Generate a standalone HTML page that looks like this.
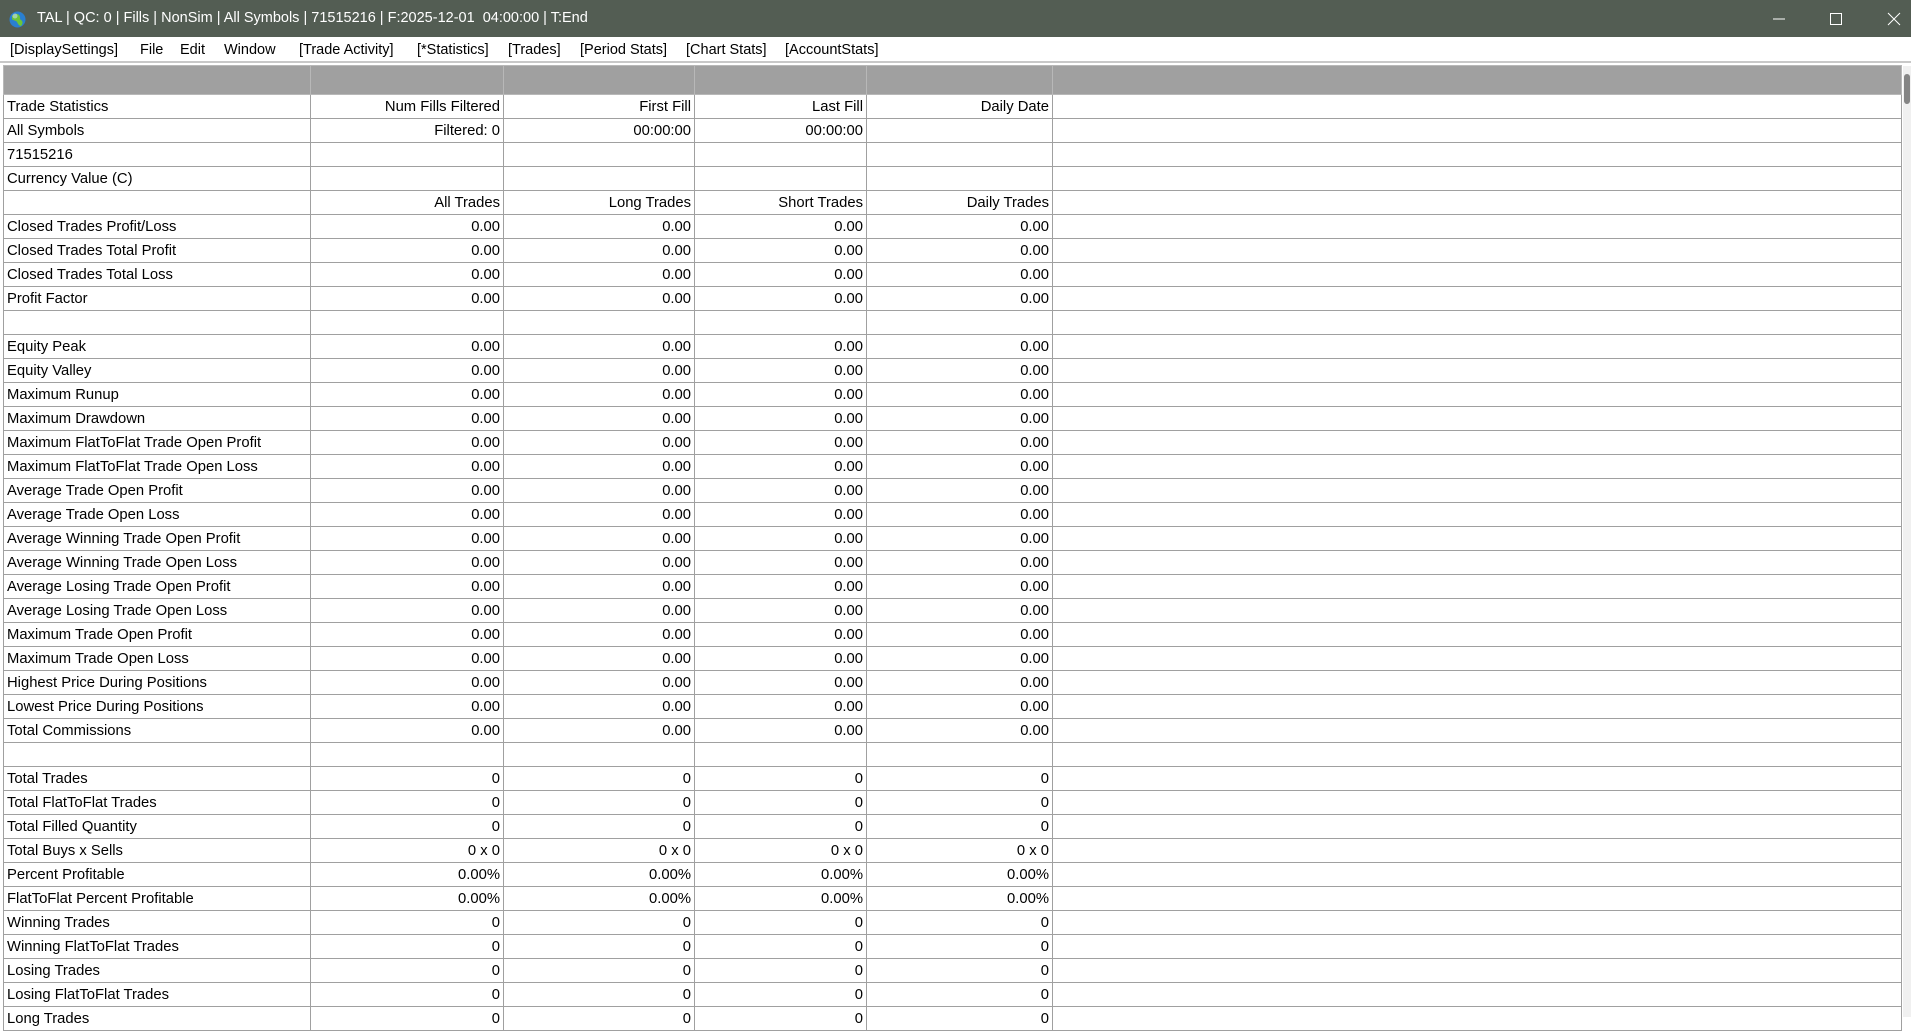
<!DOCTYPE html>
<html><head><meta charset="utf-8"><style>
*{margin:0;padding:0;box-sizing:border-box}
html,body{width:1911px;height:1017px;overflow:hidden;background:#fff;font-family:"Liberation Sans",sans-serif;font-size:14px;color:#000}
#title{position:absolute;left:0;top:0;width:1911px;height:37px;background:#535d53;color:#fff}
#title .t{position:absolute;left:37px;top:10px;font-size:14.5px}
#menu{position:absolute;left:0;top:37px;width:1911px;height:26px;background:#fff;border-bottom:2px solid #c8c8c8}
#menu span{position:absolute;top:5px;font-size:14.5px}
#tbl{position:absolute;left:3px;top:65px;border-collapse:collapse;table-layout:fixed;width:1899px}
#tbl td{height:24px;border:1px solid #a0a0a0;padding:0 3px 0 3px;text-align:right;white-space:nowrap;overflow:hidden;line-height:22px;font-size:14.8px}
#tbl td:first-child{text-align:left;border-left:1px solid #a0a0a0}
#tbl tr.h td{background:#a0a0a0;height:29px;border-color:#b8b8b8}
#sb{position:absolute;left:1903px;top:66px;width:8px;height:951px;background:#f0f0f0}
</style></head><body>
<div id="title">
<svg style="position:absolute;left:9px;top:11px" width="17" height="17" viewBox="0 0 17 17"><circle cx="8.5" cy="8.5" r="8" fill="#2a7fd0"/><path d="M3 5c2-2 5-3 7-1s0 4 2 5 2 4 0 6c-2 0-3-2-4-4s-4-1-5-3z" fill="#6cc43a"/><circle cx="6" cy="5" r="2.5" fill="#cde" opacity=".6"/></svg>
<div class="t">TAL | QC: 0 | Fills | NonSim | All Symbols | 71515216 | F:2025-12-01&nbsp; 04:00:00 | T:End</div>
<svg style="position:absolute;left:1772px;top:12px" width="14" height="14"><path d="M1 7h12" stroke="#fff" stroke-width="1"/></svg>
<svg style="position:absolute;left:1829px;top:12px" width="14" height="14"><rect x="1.5" y="1.5" width="11" height="11" fill="none" stroke="#fff" stroke-width="1"/></svg>
<svg style="position:absolute;left:1887px;top:12px" width="14" height="14"><path d="M1 1l12 12M13 1L1 13" stroke="#fff" stroke-width="1"/></svg>
</div>
<div id="menu">
<span style="left:10px">[DisplaySettings]</span><span style="left:140px">File</span><span style="left:180px">Edit</span><span style="left:224px">Window</span><span style="left:299px">[Trade Activity]</span><span style="left:417px">[*Statistics]</span><span style="left:508px">[Trades]</span><span style="left:580px">[Period Stats]</span><span style="left:686px">[Chart Stats]</span><span style="left:785px">[AccountStats]</span>
</div>
<table id="tbl">
<colgroup><col style="width:307px"><col style="width:193px"><col style="width:191px"><col style="width:172px"><col style="width:186px"><col></colgroup>
<tr class="h"><td></td><td></td><td></td><td></td><td></td><td></td></tr>
<tr><td>Trade Statistics</td><td>Num Fills Filtered</td><td>First Fill</td><td>Last Fill</td><td>Daily Date</td><td></td></tr>
<tr><td>All Symbols</td><td>Filtered: 0</td><td>00:00:00</td><td>00:00:00</td><td></td><td></td></tr>
<tr><td>71515216</td><td></td><td></td><td></td><td></td><td></td></tr>
<tr><td>Currency Value (C)</td><td></td><td></td><td></td><td></td><td></td></tr>
<tr><td></td><td>All Trades</td><td>Long Trades</td><td>Short Trades</td><td>Daily Trades</td><td></td></tr>
<tr><td>Closed Trades Profit/Loss</td><td>0.00</td><td>0.00</td><td>0.00</td><td>0.00</td><td></td></tr>
<tr><td>Closed Trades Total Profit</td><td>0.00</td><td>0.00</td><td>0.00</td><td>0.00</td><td></td></tr>
<tr><td>Closed Trades Total Loss</td><td>0.00</td><td>0.00</td><td>0.00</td><td>0.00</td><td></td></tr>
<tr><td>Profit Factor</td><td>0.00</td><td>0.00</td><td>0.00</td><td>0.00</td><td></td></tr>
<tr><td></td><td></td><td></td><td></td><td></td><td></td></tr>
<tr><td>Equity Peak</td><td>0.00</td><td>0.00</td><td>0.00</td><td>0.00</td><td></td></tr>
<tr><td>Equity Valley</td><td>0.00</td><td>0.00</td><td>0.00</td><td>0.00</td><td></td></tr>
<tr><td>Maximum Runup</td><td>0.00</td><td>0.00</td><td>0.00</td><td>0.00</td><td></td></tr>
<tr><td>Maximum Drawdown</td><td>0.00</td><td>0.00</td><td>0.00</td><td>0.00</td><td></td></tr>
<tr><td>Maximum FlatToFlat Trade Open Profit</td><td>0.00</td><td>0.00</td><td>0.00</td><td>0.00</td><td></td></tr>
<tr><td>Maximum FlatToFlat Trade Open Loss</td><td>0.00</td><td>0.00</td><td>0.00</td><td>0.00</td><td></td></tr>
<tr><td>Average Trade Open Profit</td><td>0.00</td><td>0.00</td><td>0.00</td><td>0.00</td><td></td></tr>
<tr><td>Average Trade Open Loss</td><td>0.00</td><td>0.00</td><td>0.00</td><td>0.00</td><td></td></tr>
<tr><td>Average Winning Trade Open Profit</td><td>0.00</td><td>0.00</td><td>0.00</td><td>0.00</td><td></td></tr>
<tr><td>Average Winning Trade Open Loss</td><td>0.00</td><td>0.00</td><td>0.00</td><td>0.00</td><td></td></tr>
<tr><td>Average Losing Trade Open Profit</td><td>0.00</td><td>0.00</td><td>0.00</td><td>0.00</td><td></td></tr>
<tr><td>Average Losing Trade Open Loss</td><td>0.00</td><td>0.00</td><td>0.00</td><td>0.00</td><td></td></tr>
<tr><td>Maximum Trade Open Profit</td><td>0.00</td><td>0.00</td><td>0.00</td><td>0.00</td><td></td></tr>
<tr><td>Maximum Trade Open Loss</td><td>0.00</td><td>0.00</td><td>0.00</td><td>0.00</td><td></td></tr>
<tr><td>Highest Price During Positions</td><td>0.00</td><td>0.00</td><td>0.00</td><td>0.00</td><td></td></tr>
<tr><td>Lowest Price During Positions</td><td>0.00</td><td>0.00</td><td>0.00</td><td>0.00</td><td></td></tr>
<tr><td>Total Commissions</td><td>0.00</td><td>0.00</td><td>0.00</td><td>0.00</td><td></td></tr>
<tr><td></td><td></td><td></td><td></td><td></td><td></td></tr>
<tr><td>Total Trades</td><td>0</td><td>0</td><td>0</td><td>0</td><td></td></tr>
<tr><td>Total FlatToFlat Trades</td><td>0</td><td>0</td><td>0</td><td>0</td><td></td></tr>
<tr><td>Total Filled Quantity</td><td>0</td><td>0</td><td>0</td><td>0</td><td></td></tr>
<tr><td>Total Buys x Sells</td><td>0 x 0</td><td>0 x 0</td><td>0 x 0</td><td>0 x 0</td><td></td></tr>
<tr><td>Percent Profitable</td><td>0.00%</td><td>0.00%</td><td>0.00%</td><td>0.00%</td><td></td></tr>
<tr><td>FlatToFlat Percent Profitable</td><td>0.00%</td><td>0.00%</td><td>0.00%</td><td>0.00%</td><td></td></tr>
<tr><td>Winning Trades</td><td>0</td><td>0</td><td>0</td><td>0</td><td></td></tr>
<tr><td>Winning FlatToFlat Trades</td><td>0</td><td>0</td><td>0</td><td>0</td><td></td></tr>
<tr><td>Losing Trades</td><td>0</td><td>0</td><td>0</td><td>0</td><td></td></tr>
<tr><td>Losing FlatToFlat Trades</td><td>0</td><td>0</td><td>0</td><td>0</td><td></td></tr>
<tr><td>Long Trades</td><td>0</td><td>0</td><td>0</td><td>0</td><td></td></tr>
</table>
<div id="sb"><div style="position:absolute;left:1px;top:8px;width:6px;height:30px;background:#858585;border-radius:3px"></div></div>
</body></html>
